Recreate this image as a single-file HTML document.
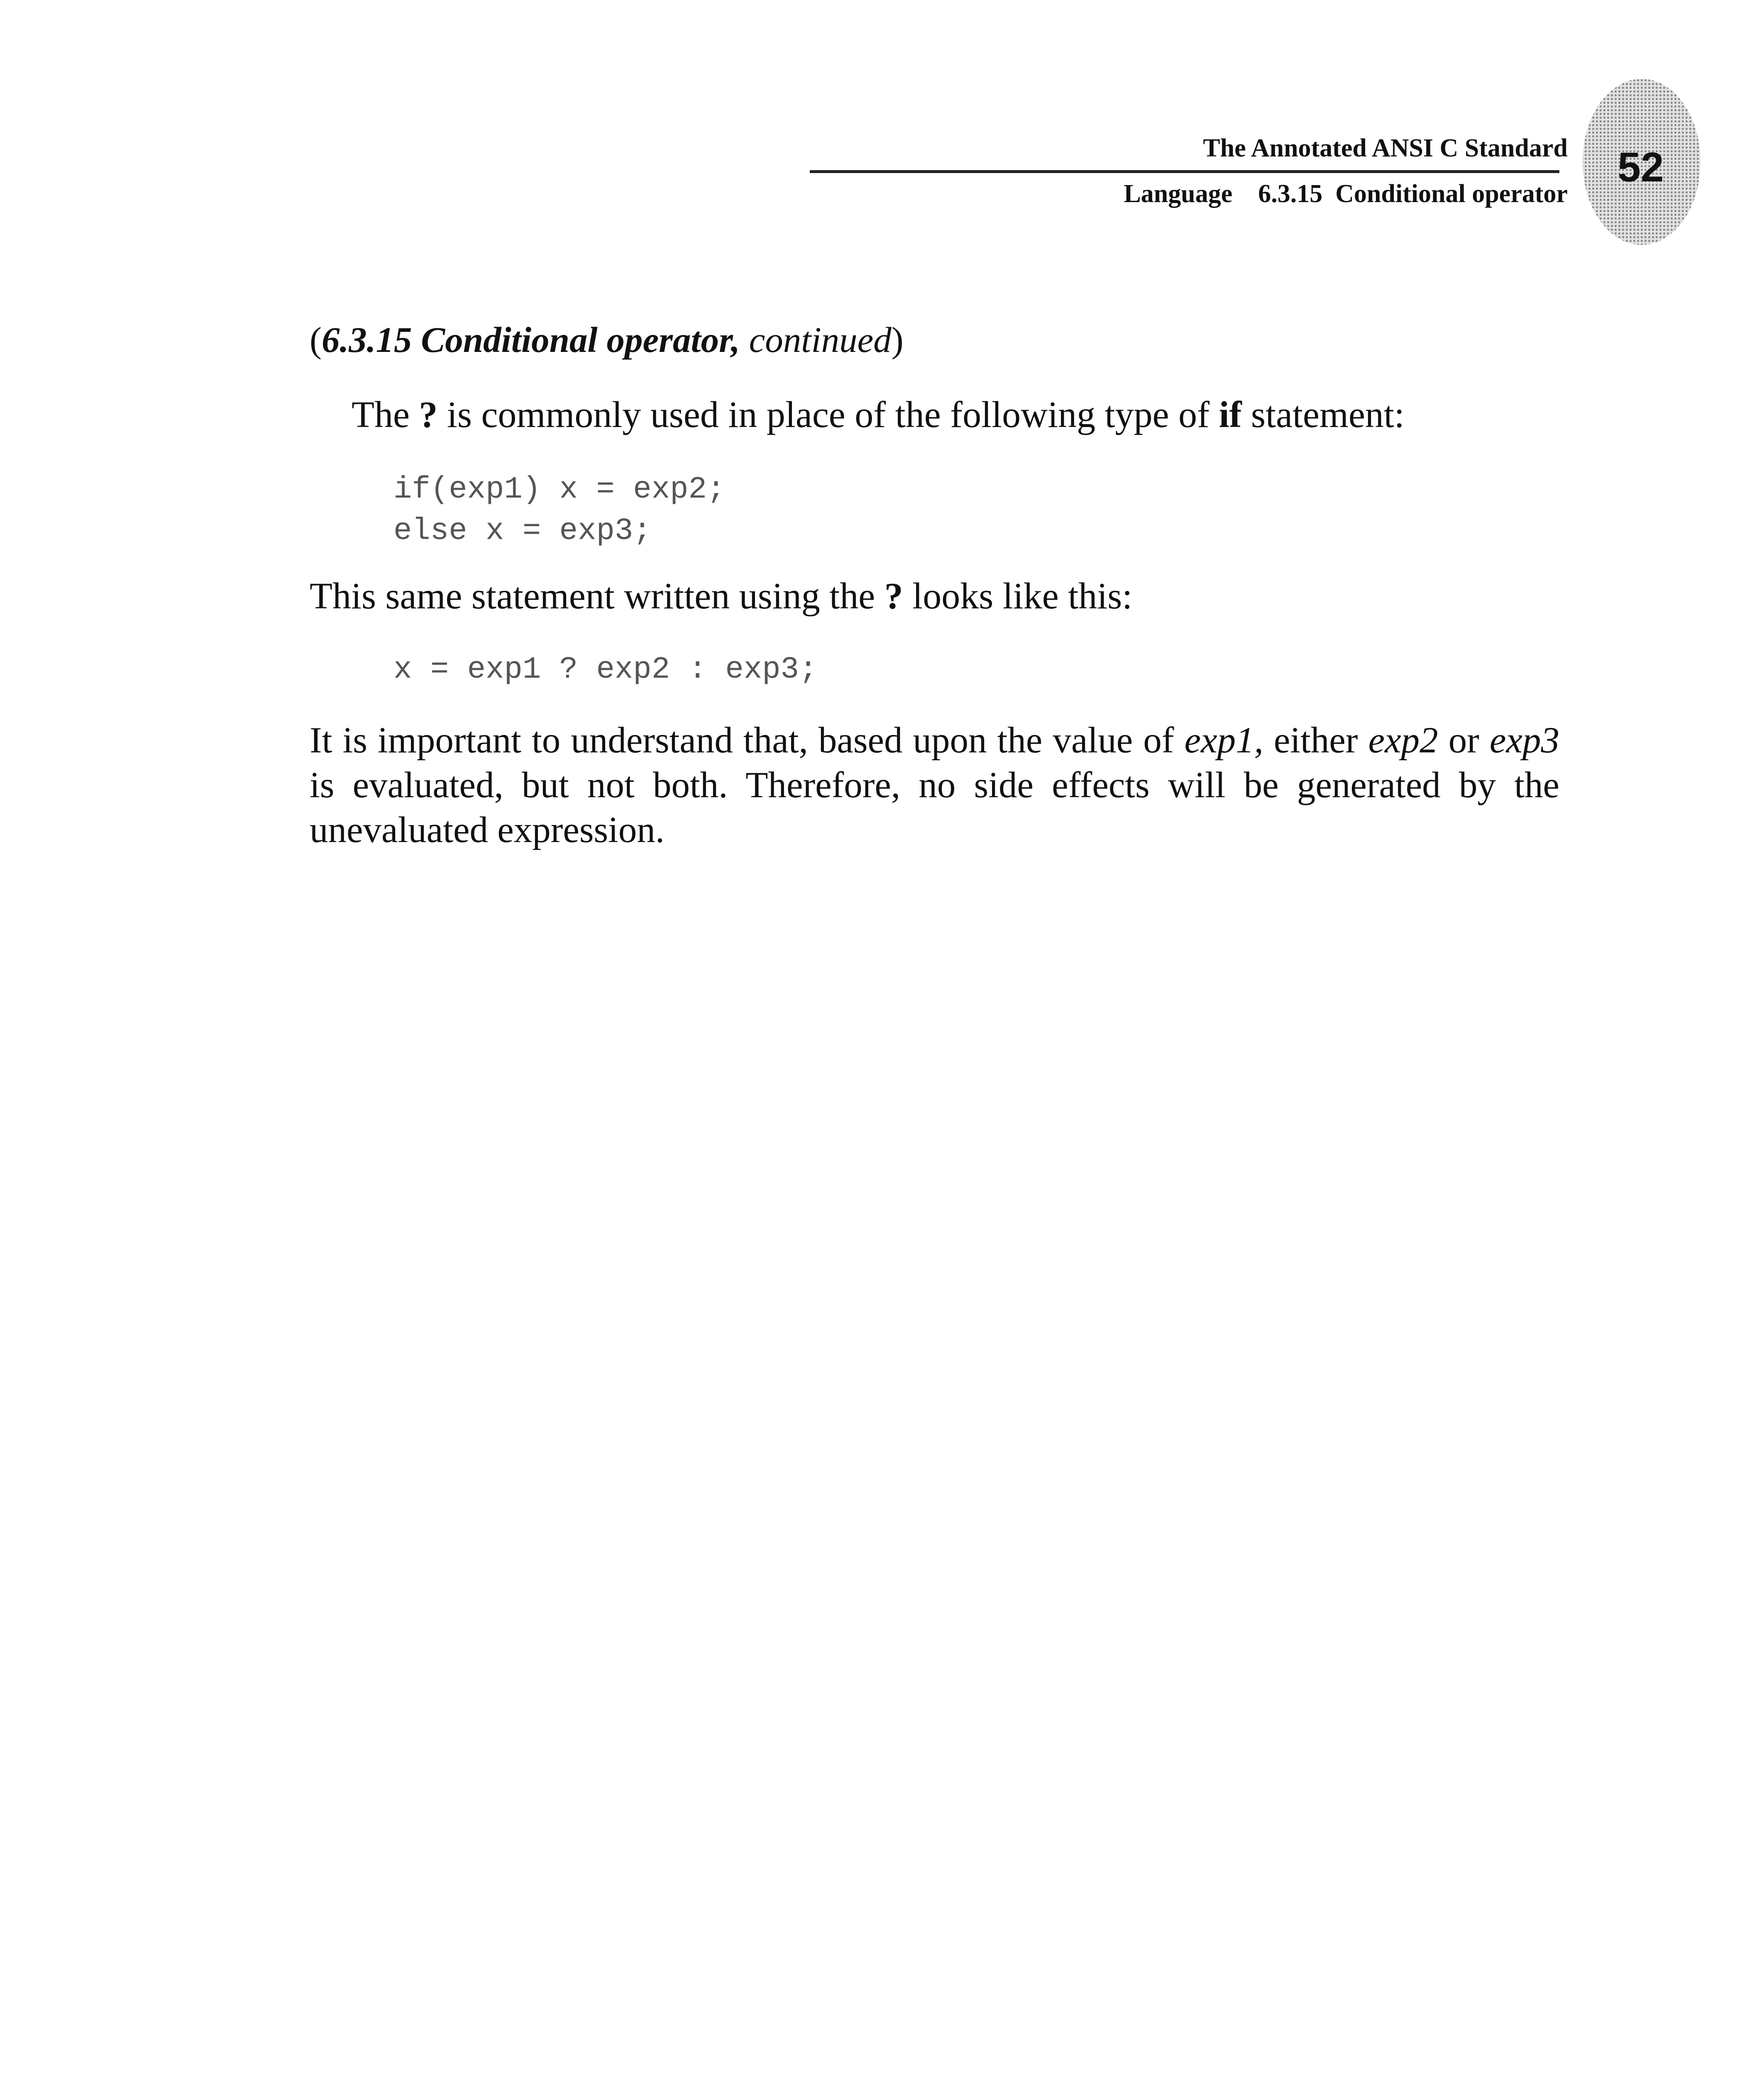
<!DOCTYPE html>
<html><head><meta charset="utf-8"><style>
html,body{margin:0;padding:0;background:#fff;width:4250px;height:5450px;overflow:hidden;}
body{position:relative;}
.a{position:absolute;white-space:nowrap;line-height:1;}
.hd{font-family:"Liberation Serif",serif;font-weight:bold;font-size:62px;color:#111;}
.body{font-family:"Liberation Serif",serif;font-size:90px;color:#111;}
.code{font-family:"Liberation Mono",monospace;font-size:74px;color:#555;}
.j{position:absolute;left:746px;width:3011px;font-family:"Liberation Serif",serif;font-size:89px;color:#111;text-align:justify;text-align-last:justify;white-space:nowrap;line-height:1;}
</style></head><body>
<div class="a hd" style="right:473px;top:326px;">The Annotated ANSI C Standard</div>
<div style="position:absolute;left:1951px;top:410px;width:1806px;height:7px;background:#222;"></div>
<div class="a hd" style="right:473px;top:436px;">Language&nbsp;&nbsp;&nbsp;&nbsp;6.3.15&nbsp;&nbsp;Conditional operator</div>
<svg style="position:absolute;left:0;top:0" width="4250" height="700">
<defs><pattern id="p" width="9" height="9" patternUnits="userSpaceOnUse"><rect width="9" height="9" fill="#e2e2e2"/><circle cx="4.5" cy="4.5" r="2.6" fill="#888"/></pattern></defs>
<ellipse cx="3955" cy="390" rx="142" ry="200" fill="url(#p)"/>
<text x="3953" y="437" text-anchor="middle" font-family="Liberation Sans, sans-serif" font-weight="bold" font-size="100" fill="#111">52</text>
</svg>
<div class="a body" style="left:746px;top:775px;font-size:87px;">(<b><i>6.3.15 Conditional operator,</i></b> <i>continued</i>)</div>
<div class="a body" style="left:847px;top:955px;">The <b>?</b> is commonly used in place of the following type of <b>if</b> statement:</div>
<div class="a code" style="left:948px;top:1143px;">if(exp1) x = exp2;</div>
<div class="a code" style="left:948px;top:1243px;">else x = exp3;</div>
<div class="a body" style="left:746px;top:1392px;">This same statement written using the <b>?</b> looks like this:</div>
<div class="a code" style="left:948px;top:1577px;">x = exp1 ? exp2 : exp3;</div>
<div class="j" style="top:1740px;">It is important to understand that, based upon the value of <i>exp1,</i> either <i>exp2</i> or <i>exp3</i></div>
<div class="j" style="top:1848px;">is evaluated, but not both. Therefore, no side effects will be generated by the</div>
<div class="a body" style="left:746px;top:1956px;font-size:89px;">unevaluated expression.</div>
</body></html>
